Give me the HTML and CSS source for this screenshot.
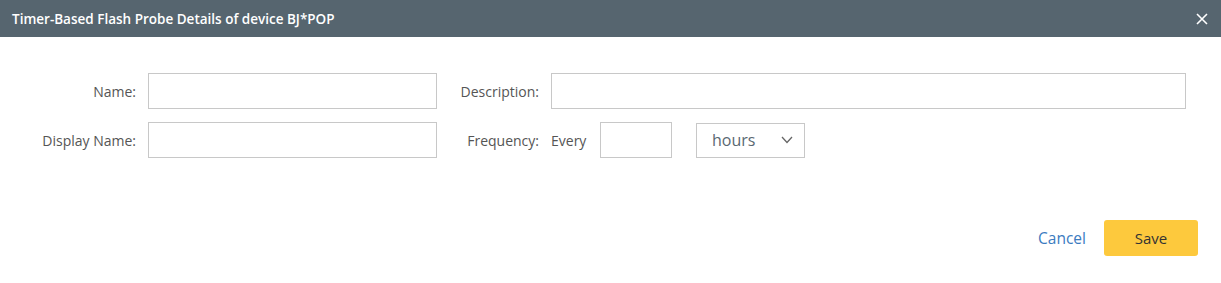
FILE: index.html
```html
<!DOCTYPE html>
<html lang="en">
<head>
    <meta charset="UTF-8">
    <title>Timer-Based Flash Probe Details</title>
    <link rel="stylesheet" href="styles.css">
</head>
<body>
    <div class="dialog">
        <header class="dialog-header">
            <span class="dialog-title">Timer-Based Flash Probe Details of device BJ*POP</span>
            <button class="close-btn" aria-label="Close">
                <svg width="12" height="12" viewBox="0 0 12 12">
                    <path d="M1 1 L11 11 M11 1 L1 11" stroke="#fff" stroke-width="1.6" fill="none"/>
                </svg>
            </button>
        </header>

        <form class="probe-form">
            <label class="field-label" for="name">Name:</label>
            <input class="field-input" type="text" id="name">
            <label class="field-label" for="description">Description:</label>
            <input class="field-input" type="text" id="description">

            <label class="field-label" for="displayName">Display Name:</label>
            <input class="field-input" type="text" id="displayName">
            <label class="field-label" for="every">Frequency:</label>
            <div class="frequency">
                <span class="every">Every</span>
                <input class="field-input every-input" type="text" id="every">
                <div class="unit-select">
                    <span>hours</span>
                    <svg width="12" height="8" viewBox="0 0 12 8">
                        <path d="M1 1 L6 6.5 L11 1" stroke="#666" stroke-width="1.3" fill="none"/>
                    </svg>
                </div>
            </div>
        </form>

        <footer class="dialog-footer">
            <a href="#" class="cancel-link">Cancel</a>
            <button class="save-btn">Save</button>
        </footer>
    </div>
</body>
</html>
```

FILE: styles.css
```css
* {
    box-sizing: border-box;
    margin: 0;
    padding: 0;
}

body {
    font-family: 'Open Sans', 'Noto Sans', sans-serif;
    font-size: 14px;
    color: #555;
    background-color: #fff;
}

.dialog {
    width: 1221px;
    height: 283px;
    background-color: #fff;
}

.dialog-header {
    height: 37px;
    background-color: #56656f;
    display: flex;
    align-items: center;
    justify-content: space-between;
    padding: 0 12px 0 12px;
}

.dialog-title {
    color: #fff;
    font-size: 13.5px;
    font-weight: 600;
}

.close-btn {
    background: none;
    border: none;
    width: 14px;
    height: 14px;
    display: flex;
    align-items: center;
    justify-content: center;
    cursor: pointer;
}

.probe-form {
    display: grid;
    grid-template-columns: 136px 289px 90px 635px;
    column-gap: 12px;
    row-gap: 13px;
    align-items: center;
    padding-top: 36px;
}

.field-label {
    text-align: right;
    color: #555;
}

.field-input {
    height: 36px;
    border: 1px solid #c8c8c8;
    background: #fff;
    font-family: inherit;
    font-size: 14px;
    padding: 0 8px;
    outline: none;
}

.frequency {
    display: flex;
    align-items: center;
}

.every {
    width: 49px;
}

.every-input {
    width: 72px;
    margin-right: 24px;
}

.unit-select {
    width: 109px;
    height: 35px;
    border: 1px solid #c8c8c8;
    display: flex;
    align-items: center;
    justify-content: space-between;
    padding: 0 11px 0 15px;
    font-size: 16px;
    color: #5a6872;
}

.dialog-footer {
    display: flex;
    justify-content: flex-end;
    align-items: center;
    gap: 18px;
    padding: 62px 23px 0 0;
}

.cancel-link {
    color: #3b7bbf;
    font-size: 15.5px;
    text-decoration: none;
}

.save-btn {
    width: 94px;
    height: 36px;
    background-color: #fdc93d;
    border: none;
    border-radius: 3px;
    font-family: inherit;
    font-size: 15px;
    color: #333;
    cursor: pointer;
}
```
